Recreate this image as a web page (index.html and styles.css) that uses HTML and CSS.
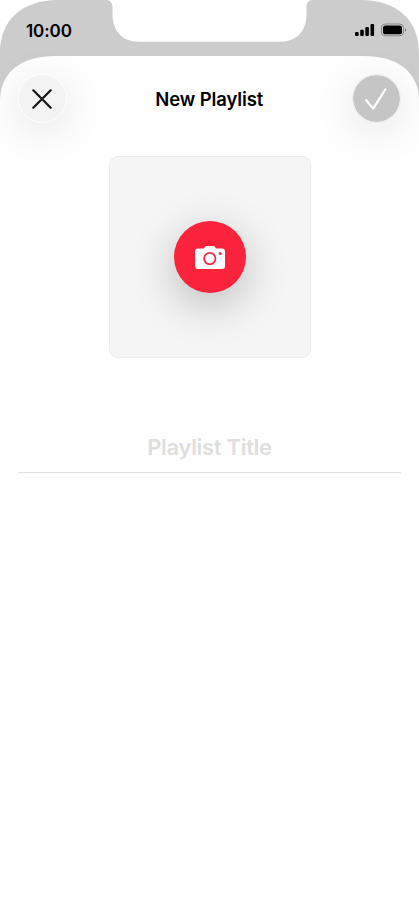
FILE: index.html
```html
<!DOCTYPE html>
<html lang="en">
<head>
<meta charset="utf-8">
<title>New Playlist</title>
<link rel="stylesheet" href="styles.css">
</head>
<body>
<main class="phone">
  <svg class="backdrop" viewBox="0 0 419 150" aria-hidden="true">
    <path d="M0 110V53C0 20 22 0 58 0H106C110 0 112.500 2.500 112.500 7V14C112.500 31 122 41.700 139 41.700H280C297 41.700 306.500 31 306.500 14V7C306.500 2.500 309 0 313 0H361C397 0 419 20 419 53V110Z" fill="#ccc"/>
    <path d="M0 150V101C0 73 20 56 56 56H363C399 56 419 73 419 101V150Z" fill="#fefefe"/>
  </svg>
  <div class="status">
    <span class="time">10:00</span>
    <svg class="indicators" width="52" height="14" viewBox="0 0 52 14" aria-hidden="true">
      <rect x="0" y="9" width="3.600" height="4" rx="1"/>
      <rect x="5.200" y="6.800" width="3.600" height="6.200" rx="1"/>
      <rect x="10.300" y="4.100" width="3.600" height="8.900" rx="1"/>
      <rect x="15.500" y="1" width="3.600" height="12" rx="1"/>
      <rect x="26.500" y="1" width="22" height="11.800" rx="3.800" fill="none" stroke="#858585"/>
      <rect x="28" y="2.500" width="19" height="8.800" rx="2.600"/>
      <path d="M50 5.200c1.800.7 1.800 2.900 0 3.600z" fill="#777"/>
    </svg>
  </div>
  <header class="header">
    <button class="round close" aria-label="Close">
      <svg width="20" height="20" viewBox="0 0 20 20"><path d="M1.300 1.300l17.400 17.400M18.700 1.300L1.300 18.700"/></svg>
    </button>
    <h1>New Playlist</h1>
    <button class="round done" aria-label="Done">
      <svg width="22" height="22" viewBox="0 0 22 22"><path d="M1.200 12.200l7 8.400L20.300 1.500"/></svg>
    </button>
  </header>
  <section class="artwork">
    <button class="camera" aria-label="Add artwork">
      <svg width="30" height="23" viewBox="0 0 30 23">
        <path d="M3 2.600h4.500c1 0 1.600-.4 2.200-1.200C10.300.5 11 0 12 0h6c1 0 1.700.5 2.300 1.400.6.800 1.200 1.200 2.200 1.200H27c2 0 3 1 3 3V20c0 2-1 3-3 3H3c-2 0-3-1-3-3V5.600c0-2 1-3 3-3z" fill="#fff"/>
        <circle cx="14.800" cy="12.600" r="5.700" fill="none" stroke="#fb233b" stroke-width="1.700"/>
        <circle cx="25.200" cy="7.600" r="1.500" fill="#fb233b"/>
      </svg>
    </button>
  </section>
  <div class="field"><span>Playlist Title</span></div>
</main>
</body>
</html>
```
FILE: styles.css
```css
* { box-sizing: border-box; }
body { margin: 0; background: #fff; font-family: Inter, "Liberation Sans", sans-serif; }
.phone {
  position: relative;
  width: 419px;
  height: 908px;
  overflow: hidden;
  background: #fefefe;
  border-radius: 0 0 54px 54px;
  display: flex;
  flex-direction: column;
  isolation: isolate;
}
.backdrop { position: absolute; top: 0; left: 0; width: 419px; height: 150px; z-index: -1; background: #fff; }
.status {
  height: 56px;
  padding: 6px 12px 0 26px;
  display: flex;
  justify-content: space-between;
  align-items: center;
}
.time { font-size: 17px; font-weight: 560; line-height: 20px; letter-spacing: -0.1px; }
.indicators { margin-top: -2px; }
.header {
  height: 85px;
  padding: 0 18px 0 17.5px;
  display: flex;
  align-items: center;
  justify-content: space-between;
}
h1 { margin: 0; font-size: 18.5px; font-weight: 570; line-height: 24px; letter-spacing: -0.1px; }
button { border: 0; padding: 0; display: flex; align-items: center; justify-content: center; border-radius: 50%; }
.round { width: 49px; height: 49px; box-shadow: 0 8px 42px rgba(0, 0, 0, 0.1); }
.round svg { fill: none; stroke-linecap: round; stroke-linejoin: round; }
.close { background: #f3f3f3; border: 1.5px solid #fff; }
.close svg { stroke: #141414; stroke-width: 2.200; }
.done { background: #c5c5c5; border: 1px solid #eee; background-clip: padding-box; }
.done svg { stroke: #fff; stroke-width: 2.200; }
.artwork {
  width: 202px;
  height: 202px;
  margin: 15px 0 0 109px;
  display: flex;
  align-items: center;
  justify-content: center;
  background: #f5f5f5;
  border: 1px solid #ebebeb;
  border-radius: 9px;
}
.camera { width: 72px; height: 72px; background: #fb233b; box-shadow: 0 12px 44px rgba(0, 0, 0, 0.24); }
.field {
  margin: 66px 18px 0;
  height: 49px;
  padding-bottom: 2px;
  border-bottom: 1px solid #e3e3e3;
  display: flex;
  align-items: center;
  justify-content: center;
  color: #dedede;
  font-size: 22px;
  font-weight: 570;
  line-height: 28px;
  letter-spacing: -0.32px;
}
```
